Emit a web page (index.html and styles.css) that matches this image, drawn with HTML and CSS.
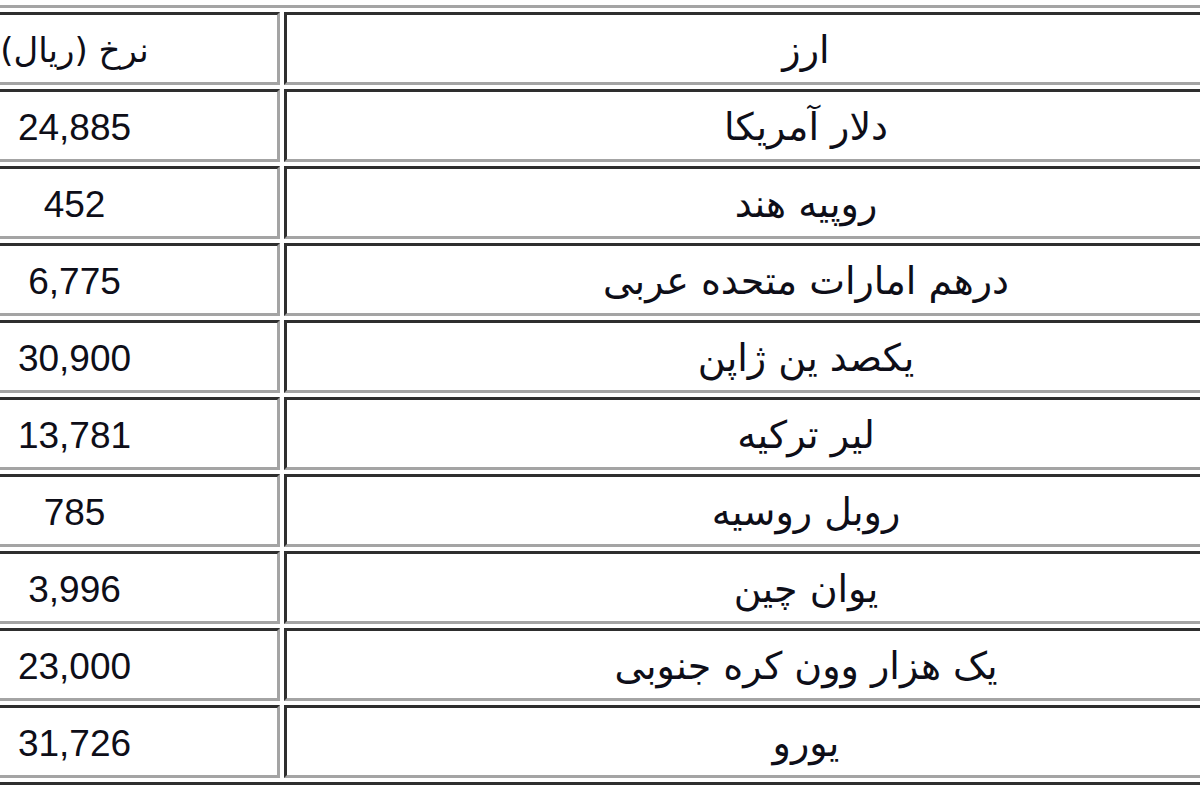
FILE: index.html
```html
<!DOCTYPE html>
<html lang="fa">
<head>
<meta charset="utf-8">
<title>نرخ ارز</title>
<link rel="stylesheet" href="styles.css">
</head>
<body>
<div class="frame">
  <table class="rates" dir="rtl">
    <colgroup><col class="c-cur"><col class="c-rate"></colgroup>
    <tr><td class="cur">ارز</td><td class="rate">نرخ (ریال)</td></tr>
    <tr><td class="cur">دلار آمریکا</td><td class="rate num">24,885</td></tr>
    <tr><td class="cur">روپیه هند</td><td class="rate num">452</td></tr>
    <tr><td class="cur">درهم امارات متحده عربی</td><td class="rate num">6,775</td></tr>
    <tr><td class="cur">یکصد ین ژاپن</td><td class="rate num">30,900</td></tr>
    <tr><td class="cur">لیر ترکیه</td><td class="rate num">13,781</td></tr>
    <tr><td class="cur">روبل روسیه</td><td class="rate num">785</td></tr>
    <tr><td class="cur">یوان چین</td><td class="rate num">3,996</td></tr>
    <tr><td class="cur">یک هزار وون کره جنوبی</td><td class="rate num">23,000</td></tr>
    <tr><td class="cur">یورو</td><td class="rate num">31,726</td></tr>
  </table>
</div>
</body>
</html>
```
FILE: styles.css
```css
html, body {
  margin: 0;
  padding: 0;
  background: #ffffff;
}
.frame {
  width: 1200px;
  height: 800px;
  overflow: hidden;
  padding-top: 5px;
  box-sizing: border-box;
}
.rates {
  margin-left: -138px;
  width: 1473px;
  table-layout: fixed;
  border-collapse: separate;
  border-spacing: 4px;
  border-style: solid;
  border-width: 3px;
  border-color: #a4a4a4 #2e2e2e #2e2e2e #a4a4a4;
  font-family: "Liberation Sans", "DejaVu Sans", sans-serif;
  font-size: 37px;
  color: #0e0e18;
}
.c-cur { width: 1044px; }
.c-rate { width: 411px; }
.rates td {
  height: 62px;
  padding: 5px 0 0;
  text-align: center;
  vertical-align: middle;
  border-style: solid;
  border-width: 3px;
  border-color: #2e2e2e #a4a4a4 #a4a4a4 #2e2e2e;
  line-height: 1.15;
  white-space: nowrap;
}
.rates td.cur {
  font-family: "DejaVu Sans", sans-serif;
  font-size: 38px;
}
.rates td.rate {
  font-family: "DejaVu Sans", sans-serif;
  font-size: 34px;
}
.rates td.num {
  font-family: "Liberation Sans", sans-serif;
  font-size: 37px;
}
```
